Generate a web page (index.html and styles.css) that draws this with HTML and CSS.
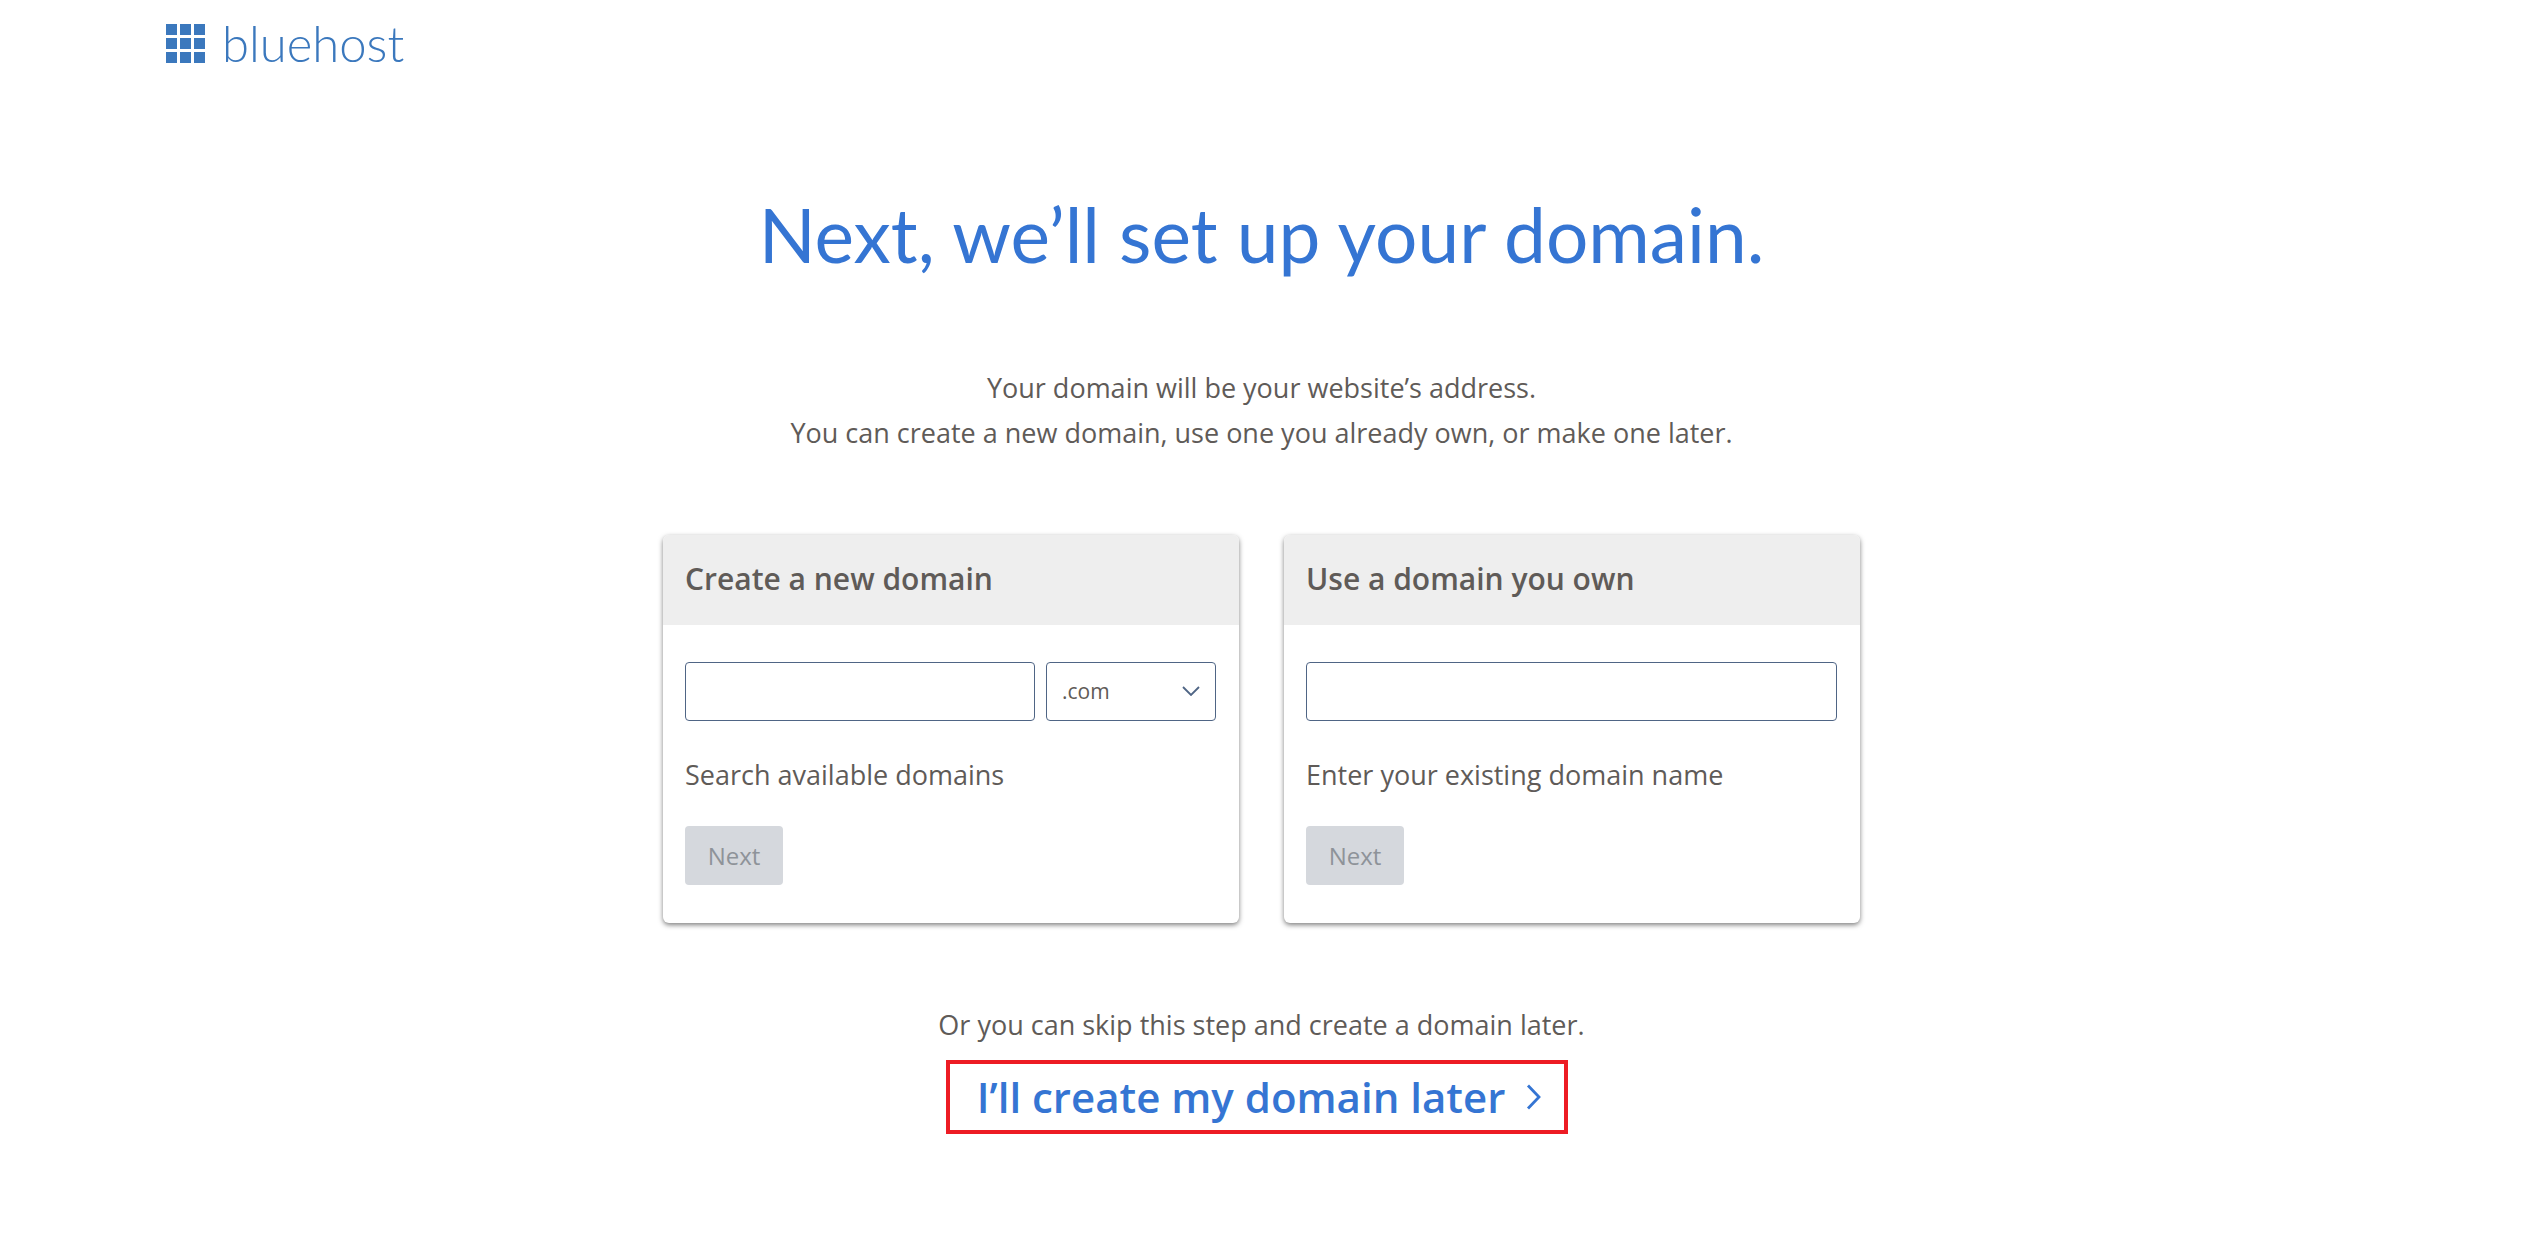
FILE: index.html
```html
<!DOCTYPE html>
<html lang="en">
<head>
  <meta charset="UTF-8">
  <meta name="viewport" content="width=device-width, initial-scale=1.0">
  <title>Bluehost - Set up your domain</title>
  <link rel="stylesheet" href="styles.css">
</head>
<body>
  <header class="topbar">
    <a class="logo" href="#">
      <svg class="logo-grid" width="39" height="39" viewBox="0 0 39 39" aria-hidden="true">
        <rect x="0" y="0" width="11" height="11"/><rect x="14" y="0" width="11" height="11"/><rect x="28" y="0" width="11" height="11"/>
        <rect x="0" y="14" width="11" height="11"/><rect x="14" y="14" width="11" height="11"/><rect x="28" y="14" width="11" height="11"/>
        <rect x="0" y="28" width="11" height="11"/><rect x="14" y="28" width="11" height="11"/><rect x="28" y="28" width="11" height="11"/>
      </svg>
      <span class="logo-text">bluehost</span>
    </a>
  </header>

  <main class="content">
    <h1>Next, we’ll set up your domain.</h1>

    <div class="intro">
      <p>Your domain will be your website’s address.</p>
      <p>You can create a new domain, use one you already own, or make one later.</p>
    </div>

    <div class="cards">
      <section class="card">
        <h2 class="card-title">Create a new domain</h2>
        <div class="card-body">
          <div class="field-row">
            <input class="text-input" type="text" aria-label="New domain">
            <div class="select-box">
              <span>.com</span>
              <svg width="18" height="10" viewBox="0 0 18 10" aria-hidden="true"><path d="M1 1l8 8 8-8" fill="none" stroke="#4f6585" stroke-width="1.8"/></svg>
            </div>
          </div>
          <p class="hint">Search available domains</p>
          <button class="next-btn" disabled>Next</button>
        </div>
      </section>

      <section class="card">
        <h2 class="card-title">Use a domain you own</h2>
        <div class="card-body">
          <div class="field-row">
            <input class="text-input" type="text" aria-label="Existing domain">
          </div>
          <p class="hint">Enter your existing domain name</p>
          <button class="next-btn" disabled>Next</button>
        </div>
      </section>
    </div>

    <p class="skip">Or you can skip this step and create a domain later.</p>
    <a class="later-link" href="#">
      <span>I’ll create my domain later</span>
      <svg width="15" height="26" viewBox="0 0 15 26" aria-hidden="true"><path d="M2 1.500l11 11.500-11 11.500" fill="none" stroke="#3575d3" stroke-width="2.800"/></svg>
    </a>
  </main>
</body>
</html>
```

FILE: styles.css
```css
body {
  margin: 0;
  background-color: #fff;
  font-family: "Open Sans", "Liberation Sans", sans-serif;
  color: #5f5b58;
}

.topbar {
  padding: 20px 0 0 166px;
}

.logo {
  display: inline-flex;
  align-items: center;
  gap: 17px;
  height: 46px;
  text-decoration: none;
}

.logo-grid {
  fill: #3b78bd;
}

.logo-text {
  font-family: "Lato", sans-serif;
  font-weight: 300;
  font-size: 49px;
  line-height: 46px;
  color: #3b78bd;
}

.content {
  display: flex;
  flex-direction: column;
  align-items: center;
  padding-right: 6px;
}

h1 {
  margin: 120px 0 0;
  font-family: "Lato", sans-serif;
  font-weight: 400;
  font-size: 74.8px;
  line-height: 92px;
  color: #3575d3;
}

.intro {
  margin-top: 85px;
  text-align: center;
  font-size: 27px;
  line-height: 45px;
}

.intro p {
  margin: 0;
}

.cards {
  display: flex;
  gap: 45px;
  margin-top: 80px;
}

.card {
  width: 576px;
  height: 388px;
  border-radius: 6px;
  background-color: #fff;
  box-shadow: 0 2px 5px rgba(0,0,0,0.5);
  overflow: hidden;
}

.card-title {
  margin: 0;
  height: 90px;
  padding: 0 22px;
  background-color: #eee;
  font-size: 30px;
  font-weight: 600;
  line-height: 87px;
}

.card-body {
  padding: 37px 23px 0 22px;
}

.field-row {
  display: flex;
  gap: 11px;
}

.text-input {
  flex: 1;
  min-width: 0;
  height: 59px;
  box-sizing: border-box;
  border: 1px solid #4f6585;
  border-radius: 4px;
}

.select-box {
  display: flex;
  align-items: center;
  justify-content: space-between;
  width: 170px;
  height: 59px;
  box-sizing: border-box;
  padding: 0 15px;
  border: 1px solid #4f6585;
  border-radius: 4px;
  font-size: 21px;
}

.hint {
  margin: 37px 0 0;
  font-size: 27px;
  line-height: 34px;
}

.next-btn {
  display: block;
  width: 98px;
  height: 59px;
  margin-top: 34px;
  border: none;
  border-radius: 4px;
  background-color: #d5d8dd;
  font-family: inherit;
  font-size: 24px;
  color: #8e9399;
}

.skip {
  margin: 85px 0 0;
  font-size: 27px;
  line-height: 34px;
}

.later-link {
  display: flex;
  align-items: center;
  gap: 21px;
  margin: 18px 9px 0 0;
  height: 74px;
  box-sizing: border-box;
  padding: 0 23px 0 27px;
  border: 4px solid #ed1c24;
  font-size: 42px;
  font-weight: 600;
  color: #3575d3;
  text-decoration: none;
}
```
